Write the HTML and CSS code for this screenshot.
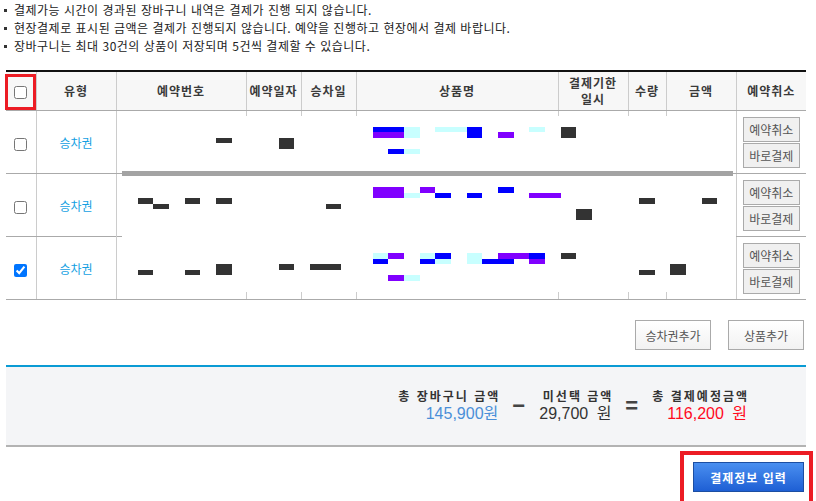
FILE: index.html
```html
<!DOCTYPE html>
<html lang="ko">
<head>
    <meta charset="UTF-8">
    <title>장바구니</title>
    <link rel="stylesheet" href="styles.css">
</head>
<body>
    <div class="cart">
        <ul class="notice">
            <li>결제가능 시간이 경과된 장바구니 내역은 결제가 진행 되지 않습니다.</li>
            <li>현장결제로 표시된 금액은 결제가 진행되지 않습니다. 예약을 진행하고 현장에서 결제 바랍니다.</li>
            <li>장바구니는 최대 30건의 상품이 저장되며 5건씩 결제할 수 있습니다.</li>
        </ul>

        <table class="cart-table">
            <colgroup>
                <col class="col-chk">
                <col class="col-type">
                <col class="col-no">
                <col class="col-date">
                <col class="col-ride">
                <col class="col-name">
                <col class="col-limit">
                <col class="col-qty">
                <col class="col-price">
                <col class="col-cancel">
            </colgroup>
            <thead>
                <tr>
                    <th class="th-chk"><input type="checkbox"><span class="mark"></span></th>
                    <th>유형</th>
                    <th>예약번호</th>
                    <th>예약일자</th>
                    <th>승차일</th>
                    <th>상품명</th>
                    <th class="th-limit">결제기한<br>일시</th>
                    <th>수량</th>
                    <th>금액</th>
                    <th>예약취소</th>
                </tr>
            </thead>
            <tbody>
                <tr>
                    <td><input type="checkbox"></td>
                    <td class="type">승차권</td>
                    <td class="board" colspan="7" rowspan="3"><div class="board-inner" id="board"></div></td>
                    <td class="act">
                        <div class="act-btns"><button class="btn-sm">예약취소</button><button class="btn-sm">바로결제</button></div>
                    </td>
                </tr>
                <tr>
                    <td><input type="checkbox"></td>
                    <td class="type">승차권</td>
                    <td class="act">
                        <div class="act-btns"><button class="btn-sm">예약취소</button><button class="btn-sm">바로결제</button></div>
                    </td>
                </tr>
                <tr>
                    <td><input type="checkbox" checked></td>
                    <td class="type">승차권</td>
                    <td class="act">
                        <div class="act-btns"><button class="btn-sm">예약취소</button><button class="btn-sm">바로결제</button></div>
                    </td>
                </tr>
            </tbody>
        </table>

        <div class="add-row">
            <button class="btn-line">승차권추가</button>
            <button class="btn-line">상품추가</button>
        </div>

        <div class="summary">
            <div class="sum-item">
                <div class="sum-label">총 장바구니 금액</div>
                <div class="sum-val blue">145,900원</div>
            </div>
            <span class="op minus">−</span>
            <div class="sum-item">
                <div class="sum-label">미선택 금액</div>
                <div class="sum-val">29,700 원</div>
            </div>
            <span class="op equal">=</span>
            <div class="sum-item">
                <div class="sum-label">총 결제예정금액</div>
                <div class="sum-val red">116,200 원</div>
            </div>
        </div>

        <div class="pay-row">
            <div class="pay-mark"><button class="btn-pay">결제정보 입력</button></div>
        </div>
    </div>

    <script>
        // 가려진 항목 (페이지 좌표 기준)
        const OX = 117, OY = 112;
        const COLORS = {
            b: '#0000ff', p: '#8000ff', c: '#c8ffff', d: '#333333',
            g: '#a3a3a3', l: '#cccccc', r: '#aaaaaa'
        };

        const blocks = [
            // 칸 구분선 토막
            [246, 112, 247, 117, 'l'], [301, 112, 302, 117, 'l'], [356, 112, 357, 117, 'l'],
            [558, 112, 559, 117, 'l'], [628, 112, 629, 117, 'l'], [666, 112, 667, 117, 'l'],
            [246, 293, 247, 300, 'l'], [301, 293, 302, 300, 'l'], [356, 293, 357, 300, 'l'],
            [558, 293, 559, 300, 'l'], [628, 293, 629, 300, 'l'], [666, 293, 667, 300, 'l'],
            [117, 174, 122, 175, 'r'], [117, 237, 122, 238, 'r'], [733, 174, 736, 175, 'r'],
            [122, 172, 733, 177, 'g'],

            // 1행
            [216, 139, 232, 144, 'd'], [279, 139, 294, 150, 'd'],
            [373, 128, 404, 133, 'b'], [373, 133, 404, 139, 'p'], [404, 128, 420, 139, 'c'],
            [435, 128, 467, 133, 'c'], [467, 128, 482, 139, 'b'], [498, 133, 514, 139, 'p'],
            [529, 128, 545, 133, 'c'], [561, 128, 576, 139, 'd'],
            [388, 150, 404, 155, 'b'], [404, 150, 420, 155, 'c'],

            // 2행
            [138, 199, 153, 205, 'd'], [153, 205, 169, 210, 'd'], [185, 199, 200, 205, 'd'],
            [216, 199, 232, 205, 'd'], [326, 205, 341, 210, 'd'],
            [373, 188, 404, 199, 'p'], [404, 194, 420, 199, 'c'], [420, 188, 435, 194, 'p'],
            [435, 194, 451, 199, 'b'], [467, 194, 482, 199, 'b'], [498, 188, 514, 194, 'b'],
            [529, 194, 561, 199, 'p'], [576, 210, 592, 221, 'd'],
            [639, 199, 655, 205, 'd'], [702, 199, 717, 205, 'd'],

            // 3행
            [138, 271, 153, 276, 'd'], [185, 271, 200, 276, 'd'], [216, 265, 232, 276, 'd'],
            [279, 265, 294, 271, 'd'], [310, 265, 341, 271, 'd'],
            [373, 254, 388, 260, 'c'], [388, 254, 404, 260, 'p'], [373, 260, 388, 265, 'b'],
            [388, 276, 404, 282, 'p'], [404, 276, 420, 282, 'c'],
            [420, 254, 435, 260, 'c'], [435, 254, 451, 260, 'b'], [420, 260, 435, 265, 'b'],
            [435, 260, 451, 265, 'c'], [467, 254, 482, 265, 'c'], [482, 260, 514, 265, 'b'],
            [498, 254, 529, 260, 'p'], [529, 254, 545, 260, 'b'], [529, 260, 545, 265, 'p'],
            [561, 254, 576, 260, 'd'], [639, 271, 655, 276, 'd'], [670, 265, 686, 276, 'd']
        ];

        const board = document.getElementById('board');
        blocks.forEach(function (b) {
            const el = document.createElement('i');
            el.className = 'blk';
            el.style.left = (b[0] - OX) + 'px';
            el.style.top = (b[1] - OY) + 'px';
            el.style.width = (b[2] - b[0]) + 'px';
            el.style.height = (b[3] - b[1]) + 'px';
            el.style.background = COLORS[b[4]];
            board.appendChild(el);
        });
    </script>
</body>
</html>
```

FILE: styles.css
```css
body {
    margin: 0;
    font-family: "Noto Sans CJK KR", "Noto Sans", sans-serif;
    font-size: 12px;
    color: #222;
    background: #fff;
}

button {
    font-family: "Noto Sans CJK KR", "Noto Sans", sans-serif;
    cursor: pointer;
}

.cart {
    width: 800px;
    margin-left: 6px;
}

/* 안내 문구 */
.notice {
    list-style: none;
    margin: 0 0 0 -2px;
    padding: 1px 0 0;
    letter-spacing: 0.5px;
}

.notice li {
    display: flex;
    align-items: center;
    gap: 7px;
    line-height: 18px;
}

.notice li::before {
    content: '';
    flex: none;
    width: 3px;
    height: 3px;
    background: #333;
}

/* 장바구니 표 */
.cart-table {
    margin-top: 15px;
    width: 800px;
    border-collapse: collapse;
    table-layout: fixed;
}

.col-chk { width: 30px; }
.col-type { width: 80px; }
.col-no { width: 130px; }
.col-date { width: 55px; }
.col-ride { width: 55px; }
.col-name { width: 202px; }
.col-limit { width: 70px; }
.col-qty { width: 38px; }
.col-price { width: 70px; }
.col-cancel { width: 70px; }

.cart-table th {
    height: 38px;
    padding: 0;
    background: #f7f7f7;
    border-top: 2px solid #111;
    border-bottom: 1px solid #aaa;
    border-left: 1px solid #ccc;
    color: #3a3a3a;
    font-weight: bold;
    font-size: 12px;
    line-height: 16px;
    letter-spacing: 1px;
    text-align: center;
}

.cart-table th:first-child {
    border-left: 0;
}

.th-chk {
    position: relative;
}

.mark {
    position: absolute;
    left: -1px;
    top: 2px;
    width: 31px;
    height: 36px;
    border: 3px solid #ec1c24;
    box-sizing: border-box;
}

.cart-table input[type="checkbox"] {
    margin: 0;
    vertical-align: middle;
}

.cart-table td {
    height: 61px;
    padding: 0;
    border-bottom: 1px solid #aaa;
    border-left: 1px solid #ccc;
    text-align: center;
    vertical-align: middle;
}

.cart-table td:first-child {
    border-left: 0;
}

.type {
    color: #149fe2;
}

.cart-table td.board {
    vertical-align: top;
}

.board-inner {
    position: relative;
    height: 188px;
}

.blk {
    position: absolute;
    display: block;
}

.act-btns {
    display: flex;
    flex-direction: column;
    align-items: center;
    gap: 1px;
}

.btn-sm {
    width: 57px;
    height: 25px;
    padding: 0;
    border: 1px solid #aaa;
    background: #f0f0f0;
    color: #555;
    font-size: 12px;
}

/* 추가 버튼 */
.add-row {
    display: flex;
    justify-content: flex-end;
    gap: 17px;
    margin-top: 20px;
    padding-right: 2px;
}

.btn-line {
    min-width: 76px;
    height: 30px;
    padding: 0 8px;
    border: 1px solid #aaa;
    background: linear-gradient(#fff, #f2f2f2);
    color: #555;
    font-size: 12px;
}

/* 합계 */
.summary {
    display: flex;
    justify-content: flex-end;
    align-items: center;
    height: 78px;
    margin-top: 15px;
    padding-right: 59px;
    background: #f4f5f7;
    border-top: 2px solid #0a9bd4;
    border-bottom: 2px solid #b3b3b3;
}

.sum-item {
    text-align: right;
}

.sum-label {
    color: #333;
    font-weight: bold;
    line-height: 16px;
    letter-spacing: 2px;
    margin-right: -2px;
}

.sum-val {
    font-family: "Liberation Sans", "Noto Sans CJK KR", sans-serif;
    font-size: 16px;
    line-height: 20px;
    word-spacing: 4px;
    color: #333;
}

.sum-val.blue { color: #4a8fd8; }
.sum-val.red { color: #ff0a1e; }

.op {
    font-family: "Liberation Sans", sans-serif;
    font-weight: bold;
    font-size: 22px;
    color: #444;
    text-align: center;
}

.minus {
    width: 12px;
    margin: 0 15px 0 14px;
}

.equal {
    width: 11px;
    margin: 0 16px 0 14px;
}

/* 결제 버튼 */
.pay-row {
    display: flex;
    justify-content: flex-end;
    margin: 4px -7px 0 0;
}

.pay-mark {
    padding: 7px 5px 0 9px;
    border: 4px solid #ec1c24;
    height: 40px;
}

.btn-pay {
    width: 111px;
    height: 30px;
    padding: 0;
    border: 1px solid #1c4ea2;
    background: linear-gradient(#4a8ff0, #1e5fd4);
    color: #fff;
    font-weight: bold;
    font-size: 12px;
    letter-spacing: 1px;
}
```
